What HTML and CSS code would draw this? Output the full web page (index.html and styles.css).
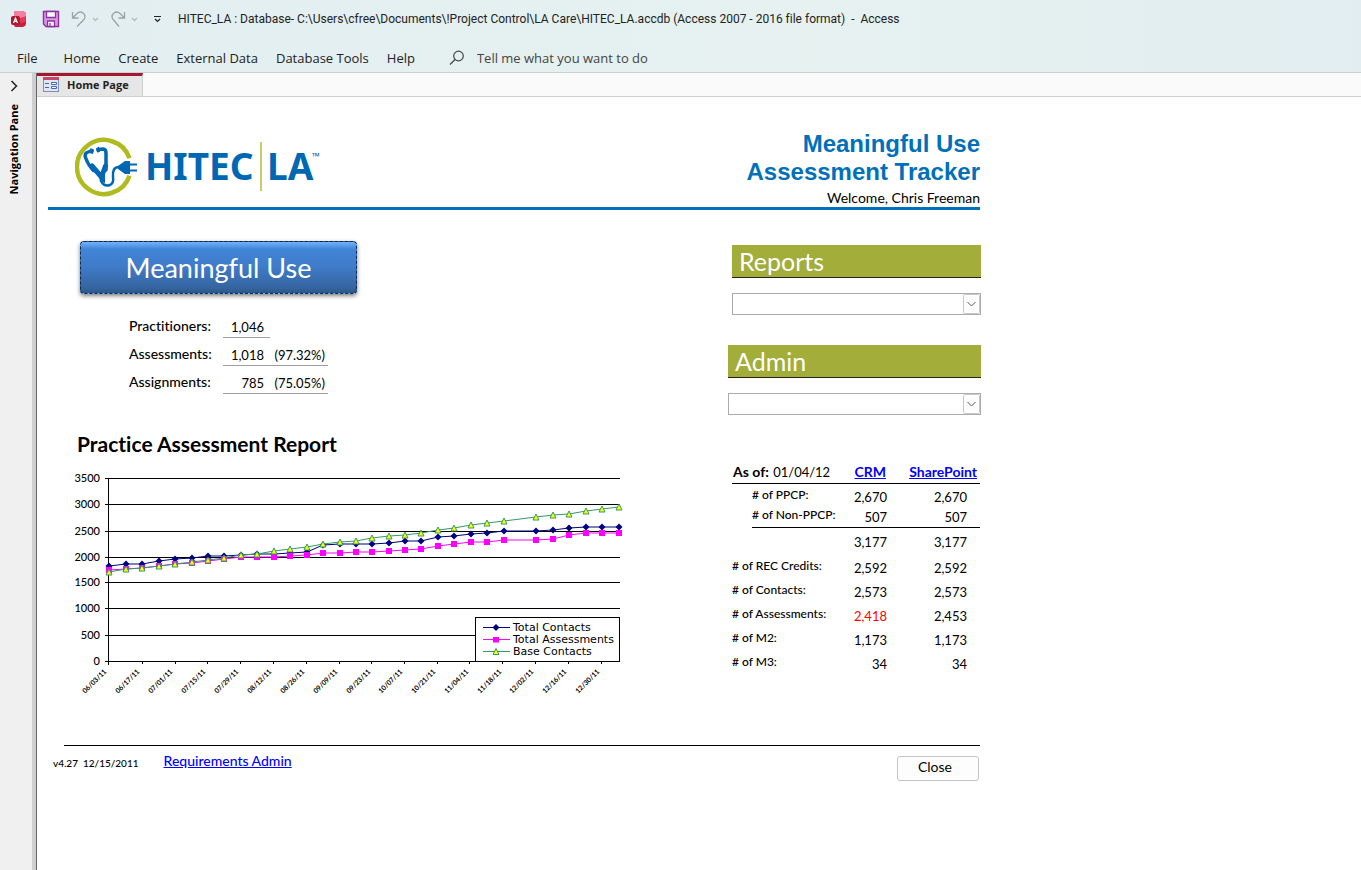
FILE: index.html
```html
<!DOCTYPE html>
<html lang="en">
<head>
    <meta charset="UTF-8">
    <meta name="viewport" content="width=device-width, initial-scale=1.0">
    <title>HITEC_LA - Access</title>
    <link rel="stylesheet" href="styles.css">
</head>
<body>

    <header class="ribbon">
        <div class="title-bar">
            <svg class="app-icon" width="16" height="18" viewBox="0 0 16 18">
                <path d="M3 3a2 2 0 0 1 2-2h7q3 1 3 3v10q0 2-3 3H5a2 2 0 0 1-2-2z" fill="#c8203c"/>
                <path d="M3 3a2 2 0 0 1 2-2h7q3 1 3 3v2q-2 2-6 2-4 0-6-2z" fill="#f77fa0"/>
                <path d="M7 8q6 0 8-2v5q-2 2-7 2z" fill="#e8385a"/>
                <rect x="0" y="6" width="9" height="9" rx="2" fill="#b01832"/>
                <path d="M2.5 13l2-5 2 5M3.3 11.4h2.4" fill="none" stroke="#fff" stroke-width="1.2"/>
            </svg>
            <button class="tool save" aria-label="Save">
                <svg width="18" height="18" viewBox="0 0 18 18">
                    <path d="M1.5 1.5h15v15H4L1.5 14z" fill="#d79be0" stroke="#8f2fa3" stroke-width="1.4"/>
                    <path d="M4.5 1.5h9v6h-9zM5.5 11h7v5.5h-7z" fill="#f6fafb" stroke="#8f2fa3" stroke-width="1.3"/>
                    <path d="M8 13v3" stroke="#8f2fa3" stroke-width="1.3"/>
                </svg>
            </button>
            <button class="tool undo" aria-label="Undo">
                <svg width="28" height="18" viewBox="0 0 28 18">
                    <path d="M1.5 2v6h6M1.5 8L6 3.5Q9 .8 12 3q4 3.5 0 7.5L6 16.5" fill="none" stroke="#9aa3a6" stroke-width="1.3"/>
                    <path d="M22 8l2.5 2.5L27 8" fill="none" stroke="#b4bcbe" stroke-width="1.3"/>
                </svg>
            </button>
            <button class="tool redo" aria-label="Redo">
                <svg width="28" height="18" viewBox="0 0 28 18">
                    <path d="M14.5 2v6h-6M14.5 8L10 3.5Q7 .8 4 3q-4 3.5 0 7.5l5 6" fill="none" stroke="#9aa3a6" stroke-width="1.3"/>
                    <path d="M22 8l2.5 2.5L27 8" fill="none" stroke="#b4bcbe" stroke-width="1.3"/>
                </svg>
            </button>
            <button class="tool more" aria-label="Customize Quick Access Toolbar">
                <svg width="9" height="8" viewBox="0 0 9 8">
                    <path d="M1 1.5h7M2 4l2.5 2.5L7 4" fill="none" stroke="#222" stroke-width="1.2"/>
                </svg>
            </button>
            <span class="file-name">HITEC_LA : Database- C:\Users\cfree\Documents\!Project Control\LA Care\HITEC_LA.accdb (Access 2007 - 2016 file format)&nbsp; -&nbsp; Access</span>
        </div>
        <nav class="menu">
            <button class="file">File</button>
            <button>Home</button>
            <button>Create</button>
            <button>External Data</button>
            <button>Database Tools</button>
            <button>Help</button>
            <label class="tell-me">
                <svg width="16" height="16" viewBox="0 0 16 16">
                    <circle cx="9.5" cy="6" r="4.8" fill="none" stroke="#444" stroke-width="1.2"/>
                    <path d="M6 9.5L1 14.5" stroke="#444" stroke-width="1.3"/>
                </svg>
                <input type="text" placeholder="Tell me what you want to do">
            </label>
        </nav>
    </header>

    <div class="workspace">
        <aside class="nav-pane">
            <button class="expand" aria-label="Expand Navigation Pane">
                <svg width="8" height="12" viewBox="0 0 8 12">
                    <path d="M1.5 1l5 5-5 5" fill="none" stroke="#222" stroke-width="1.5"/>
                </svg>
            </button>
            <span class="nav-label">Navigation Pane</span>
        </aside>

        <main class="document">
            <div class="tabs">
                <button class="tab">
                    <svg width="16" height="15" viewBox="0 0 16 15">
                        <rect x=".5" y=".5" width="15" height="14" fill="#dfe6f4" stroke="#7d8fb8"/>
                        <rect x="0" y="0" width="16" height="3" fill="#c4476b"/>
                        <path d="M2 6.5h4M2 10.5h4" stroke="#4a68a8"/>
                        <path d="M8.5 5.5h5v2h-5zM8.5 9.5h5v2h-5z" fill="#fff" stroke="#4a68a8"/>
                    </svg>
                    Home Page
                </button>
            </div>

            <div class="form">
                <div class="form-header">
                    <svg class="logo" width="250" height="60" viewBox="0 0 250 60">
                        <path d="M54.5 21.3A27 27 0 1 0 54.5 38.7" fill="none" stroke="#afbb1f" stroke-width="4.5"/>
                        <g fill="none" stroke="#0068b3" stroke-linecap="round" stroke-linejoin="round">
                            <path d="M17 13.5l-5 2q-2.500 1-1.500 5 3 8 8 13" stroke-width="3.5"/>
                            <path d="M23 12.5l5.500-.5q2.500.5 2.500 4v17" stroke-width="3.5"/>
                            <path d="M17 29l9.500 11 4-11" stroke-width="5"/>
                            <path d="M26 39v5q3 6 9 4 4-2 3-8-1-10 6-10h4" stroke-width="2.5"/>
                        </g>
                        <path d="M15.500 11l3.500 2-1 4-3.500-1zM24 9.500l-3 2 1 4 3-.5z" fill="#0068b3"/>
                        <path d="M24 38l6-1v9l-5-2z" fill="#0068b3"/>
                        <path d="M43 29l7-5h5v2.500h7v2h-7v4h7v2h-7V37h-5l-7-5z" fill="#0068b3"/>
                        <text class="logo-text" x="70" y="43">HITEC</text>
                        <path d="M186 5v49" stroke="#c5cf66" stroke-width="2"/>
                        <text class="logo-text" x="192" y="43">LA</text>
                        <text class="logo-tm" x="237" y="23">™</text>
                    </svg>
                    <div class="heading">
                        <h1>Meaningful Use<br>Assessment Tracker</h1>
                        <p class="welcome">Welcome, Chris Freeman</p>
                    </div>
                </div>

                <div class="form-body">
                    <section class="left">
                        <button class="big-button">Meaningful Use</button>

                        <table class="stats">
                            <tr><th scope="row">Practitioners:</th><td>1,046</td></tr>
                            <tr><th scope="row">Assessments:</th><td>1,018</td><td class="pct">(97.32%)</td></tr>
                            <tr><th scope="row">Assignments:</th><td>785</td><td class="pct">(75.05%)</td></tr>
                        </table>

                        <h2>Practice Assessment Report</h2>
                        <svg class="chart" width="560" height="230" viewBox="70 470 560 230">
                            <defs>
                                <marker id="diamond" markerUnits="userSpaceOnUse" markerWidth="8" markerHeight="8" refX="4" refY="4">
                                    <path d="M4 .5L7.5 4 4 7.5.5 4z" fill="#000080"/>
                                </marker>
                                <marker id="square" markerUnits="userSpaceOnUse" markerWidth="6" markerHeight="6" refX="3" refY="3">
                                    <rect width="6" height="6" fill="#ff00ff"/>
                                </marker>
                                <marker id="triangle" markerUnits="userSpaceOnUse" markerWidth="8" markerHeight="8" refX="4" refY="4">
                                    <path d="M4 1l3 6H1z" fill="#ffff00" stroke="#339966"/>
                                </marker>
                            </defs>
                            <path class="grid" d="M105 478.5h515M105 504.5h515M105 531.5h515M105 557.5h515M105 582.5h515M105 608.5h515M105 635.5h515M105 661.5h515M108.5 478v187"/>
                            <path class="grid" d="M142.5 661v3M175.5 661v3M207.5 661v3M240.5 661v3M273.5 661v3M306.5 661v3M339.5 661v3M371.5 661v3M404.5 661v3M437.5 661v3M469.5 661v3M502.5 661v3M535.5 661v3M568.5 661v3M601.5 661v3"/>
                            <g class="y-labels">
                                <text x="100" y="482">3500</text>
                                <text x="100" y="508">3000</text>
                                <text x="100" y="535">2500</text>
                                <text x="100" y="561">2000</text>
                                <text x="100" y="586">1500</text>
                                <text x="100" y="612">1000</text>
                                <text x="100" y="639">500</text>
                                <text x="100" y="665">0</text>
                            </g>
                            <g class="x-labels">
                                <text transform="translate(107 672) rotate(-45)">06/03/11</text>
                                <text transform="translate(140 672) rotate(-45)">06/17/11</text>
                                <text transform="translate(173 672) rotate(-45)">07/01/11</text>
                                <text transform="translate(206 672) rotate(-45)">07/15/11</text>
                                <text transform="translate(239 672) rotate(-45)">07/29/11</text>
                                <text transform="translate(272 672) rotate(-45)">08/12/11</text>
                                <text transform="translate(305 672) rotate(-45)">08/26/11</text>
                                <text transform="translate(338 672) rotate(-45)">09/09/11</text>
                                <text transform="translate(371 672) rotate(-45)">09/23/11</text>
                                <text transform="translate(403 672) rotate(-45)">10/07/11</text>
                                <text transform="translate(436 672) rotate(-45)">10/21/11</text>
                                <text transform="translate(469 672) rotate(-45)">11/04/11</text>
                                <text transform="translate(502 672) rotate(-45)">11/18/11</text>
                                <text transform="translate(534 672) rotate(-45)">12/02/11</text>
                                <text transform="translate(567 672) rotate(-45)">12/16/11</text>
                                <text transform="translate(600 672) rotate(-45)">12/30/11</text>
                            </g>
                            <polyline class="line contacts" points="109,566 126,564 142,564 159,561 175,559 192,558 208,556 224,556 241,555 257,554 274,554 290,553 307,552 323,545 340,544 356,544 372,544 389,543 405,541 421,541 438,537 454,536 471,534 487,533 504,531 536,531 553,530 569,528 586,527 602,527 619,527"/>
                            <polyline class="line assessments" points="109,570 126,569 142,568 159,566 175,564 192,563 208,561 224,559 241,557 257,557 274,557 290,556 307,555 323,553 340,553 356,552 372,552 389,551 405,550 421,549 438,546 454,544 471,542 487,542 504,540 536,540 553,539 569,535 586,533 602,533 619,533"/>
                            <polyline class="line base" points="109,572 126,569 142,568 159,566 175,564 192,562 208,560 224,558 241,555 257,554 274,551 290,549 307,547 323,544 340,542 356,541 372,538 389,536 405,535 421,533 438,530 454,528 471,525 487,523 504,521 536,517 553,515 569,514 586,511 602,509 619,507"/>
                            <rect x="475.5" y="617.5" width="144" height="44" fill="#fff" stroke="#000"/>
                            <polyline class="line contacts legend" points="483,627.5 496,627.5 510,627.5"/>
                            <polyline class="line assessments legend" points="483,639.5 496,639.5 510,639.5"/>
                            <polyline class="line base legend" points="483,651.5 496,651.5 510,651.5"/>
                            <g class="legend-text">
                                <text x="513" y="631">Total Contacts</text>
                                <text x="513" y="643">Total Assessments</text>
                                <text x="513" y="655">Base Contacts</text>
                            </g>
                        </svg>
                    </section>

                    <section class="right">
                        <div class="picker reports">
                            <label for="reports">Reports</label>
                            <div class="combo">
                                <select id="reports"><option></option></select>
                                <svg class="arrow" width="18" height="20" viewBox="0 0 18 20">
                                    <rect x=".5" y=".5" width="16" height="19" rx="1" fill="#fdfdfd" stroke="#c8c8c8"/>
                                    <path d="M4.5 8l4 4 4-4" fill="none" stroke="#555"/>
                                </svg>
                            </div>
                        </div>
                        <div class="picker">
                            <label for="admin">Admin</label>
                            <div class="combo">
                                <select id="admin"><option></option></select>
                                <svg class="arrow" width="18" height="20" viewBox="0 0 18 20">
                                    <rect x=".5" y=".5" width="16" height="19" rx="1" fill="#fdfdfd" stroke="#c8c8c8"/>
                                    <path d="M4.5 8l4 4 4-4" fill="none" stroke="#555"/>
                                </svg>
                            </div>
                        </div>

                        <table class="counts">
                            <thead>
                                <tr>
                                    <th colspan="2" class="as-of">As of: <span>01/04/12</span></th>
                                    <th class="crm"><a href="#">CRM</a></th>
                                    <th class="sharepoint"><a href="#">SharePoint</a></th>
                                </tr>
                            </thead>
                            <tbody class="sub">
                                <tr><td class="indent"></td><th scope="row"># of PPCP:</th><td>2,670</td><td>2,670</td></tr>
                                <tr><td class="indent"></td><th scope="row"># of Non-PPCP:</th><td>507</td><td>507</td></tr>
                            </tbody>
                            <tbody>
                                <tr class="total"><td colspan="2"></td><td>3,177</td><td>3,177</td></tr>
                                <tr><th scope="row" colspan="2"># of REC Credits:</th><td>2,592</td><td>2,592</td></tr>
                                <tr><th scope="row" colspan="2"># of Contacts:</th><td>2,573</td><td>2,573</td></tr>
                                <tr><th scope="row" colspan="2"># of Assessments:</th><td class="low">2,418</td><td>2,453</td></tr>
                                <tr><th scope="row" colspan="2"># of M2:</th><td>1,173</td><td>1,173</td></tr>
                                <tr><th scope="row" colspan="2"># of M3:</th><td>34</td><td>34</td></tr>
                            </tbody>
                        </table>
                    </section>
                </div>

                <footer class="form-footer">
                    <span class="version">v4.27&nbsp; 12/15/2011</span>
                    <a class="requirements" href="#">Requirements Admin</a>
                    <button class="close">Close</button>
                </footer>
            </div>
        </main>
    </div>

</body>
</html>
```

FILE: styles.css
```css
* {
    box-sizing: border-box;
}

body {
    margin: 0;
    min-height: 100vh;
    display: flex;
    flex-direction: column;
    font-family: Lato, "Liberation Sans", sans-serif;
    font-size: 13px;
    font-variant-ligatures: none;
    color: #000;
    background: #fff;
}

button {
    font: inherit;
    color: inherit;
    background: none;
    border: none;
    padding: 0;
}

svg {
    display: block;
}

h1, h2, p {
    margin: 0;
}

a {
    color: #0000ff;
}

/* ribbon */
.ribbon {
    font-family: "Open Sans", "Noto Sans", sans-serif;
    color: #222;
    background: linear-gradient(90deg, #e2eef1, #e6f1f0 60%, #e1edf0);
    border-bottom: 1px solid #c9d1d3;
    box-shadow: 0 1px 3px rgba(0, 0, 0, 0.15);
}

.title-bar {
    display: flex;
    align-items: center;
    height: 38px;
    padding-left: 11px;
    font-size: 12px;
}

.save {
    margin-left: 15px;
}

.undo, .redo {
    margin-left: 11px;
}

.more {
    margin: 0 16px 0 15px;
}

.file-name {
    font-family: Roboto, "Open Sans", sans-serif;
    white-space: pre;
}

.menu {
    display: flex;
    align-items: center;
    gap: 18px;
    height: 34px;
    padding: 5px 16px 0 17px;
    font-size: 13px;
}

.file {
    margin-right: 8px;
}

.tell-me {
    display: flex;
    align-items: center;
    gap: 12px;
    margin-left: 16px;
}

.tell-me input {
    width: 220px;
    padding: 0;
    border: none;
    background: none;
    font: inherit;
}

.tell-me input::placeholder {
    color: #444;
    opacity: 1;
}

/* workspace */
.workspace {
    flex: 1;
    display: flex;
}

.nav-pane {
    width: 37px;
    flex-shrink: 0;
    display: flex;
    flex-direction: column;
    align-items: center;
    gap: 12px;
    padding: 7px 9px 0 0;
    background: linear-gradient(90deg, #f0f0f0 32px, #cfcfcf 32px, #cfcfcf 36px, #666 36px);
}

.nav-label {
    writing-mode: vertical-rl;
    transform: rotate(180deg);
    font: bold 11px/16px "Open Sans", sans-serif;
}

.document {
    flex: 1;
    min-width: 0;
}

.tabs {
    height: 24px;
    display: flex;
    background: #fafafa;
    border-bottom: 1px solid #cfcfcf;
}

.tab {
    display: flex;
    align-items: center;
    gap: 8px;
    padding: 0 13px 3px 6px;
    background: #e6e6e6;
    border-top: 3px solid #a4182f;
    border-right: 1px solid #cfcfcf;
    font: bold 11px "Open Sans", sans-serif;
    color: #222;
}

/* form */
.form {
    max-width: 943px;
    padding: 33px 0 0 11px;
}

.form-header {
    display: flex;
    justify-content: space-between;
    align-items: flex-start;
    border-bottom: 3px solid #0070bb;
}

.logo {
    margin: 7px 0 0 27px;
}

.logo-text {
    font: bold 37px "Noto Sans", sans-serif;
    fill: #0068b3;
}

.logo-tm {
    font: bold 10px "Open Sans", sans-serif;
    fill: #0068b3;
}

.heading {
    text-align: right;
}

h1 {
    font: bold 24px/28px "Liberation Sans", Arial, sans-serif;
    color: #0070bb;
}

.welcome {
    line-height: 18px;
    padding-top: 3px;
    font-size: 14px;
}

.form-body {
    display: flex;
    justify-content: space-between;
    margin-right: -1px;
    padding-top: 31px;
}

.left {
    padding-left: 22px;
}

.big-button {
    display: block;
    width: 277px;
    height: 53px;
    margin-left: 10px;
    border: 1px dashed #10264a;
    border-radius: 4px;
    background: linear-gradient(#6fb4fa, #4285d8 7px, #3f7bc8 25px, #35659f 46px, #2c5588);
    box-shadow: 0 2px 4px rgba(0, 0, 0, 0.5);
    font-size: 27px;
    color: #fff;
}

.stats {
    margin: 15px 0 0 59px;
    border-collapse: collapse;
    font-size: 13px;
}

.stats tr {
    height: 28px;
}

.stats th {
    width: 94px;
    padding: 5px 0 0;
    text-align: left;
    font-size: 14px;
    font-weight: 500;
}

.stats td {
    width: 47px;
    padding: 8px 6px 0 0;
    border-bottom: 1px solid #a0a0a0;
    text-align: right;
}

.stats .pct {
    width: 58px;
    padding-right: 3px;
}

h2 {
    margin: 36px 0 0 7px;
    font-size: 21px;
    line-height: 28px;
}

.chart {
    margin-top: 12px;
}

.grid {
    fill: none;
    stroke: #000;
    shape-rendering: crispEdges;
}

.y-labels {
    font: 500 11px Lato, sans-serif;
    text-anchor: end;
}

.x-labels {
    font: bold 7px Lato, sans-serif;
    text-anchor: end;
}

.legend-text {
    font: 11px "DejaVu Sans", sans-serif;
}

.line {
    fill: none;
}

.contacts {
    stroke: #000080;
    marker: url(#diamond);
}

.assessments {
    stroke: #ff00ff;
    marker: url(#square);
}

.base {
    stroke: #339966;
    marker: url(#triangle);
}

.legend {
    marker-start: none;
    marker-end: none;
}

.right {
    width: 253px;
    padding-top: 4px;
}

.picker {
    margin-bottom: 30px;
}

.reports {
    margin-left: 4px;
}

.picker label {
    display: block;
    height: 33px;
    margin-bottom: 15px;
    padding-left: 7px;
    border-bottom: 1px solid #222;
    background: #a2ad3a;
    font-size: 25px;
    line-height: 33px;
    color: #fff;
}

.combo {
    position: relative;
    height: 22px;
}

.combo select {
    width: 100%;
    height: 22px;
    appearance: none;
    border: 1px solid #ababab;
    border-radius: 0;
    background: #fff;
}

.arrow {
    position: absolute;
    top: 1px;
    right: 0;
    pointer-events: none;
}

.counts {
    width: 248px;
    margin: 46px 0 0 4px;
    border-collapse: collapse;
    font-size: 13px;
    line-height: 16px;
}

.counts th {
    padding: 0 0 4px;
    text-align: left;
    font-size: 12px;
    font-weight: 500;
    white-space: nowrap;
}

.counts td {
    padding: 0 13px 0 0;
    text-align: right;
}

.counts tr {
    height: 24px;
}

.counts thead tr {
    height: 22px;
    border-bottom: 1px solid #000;
}

.counts thead th {
    padding: 0;
    font-size: 14px;
    font-weight: bold;
    text-align: right;
}

.counts thead .as-of {
    text-align: left;
    padding-left: 1px;
}

.as-of span {
    font-size: 13px;
    font-weight: normal;
    padding-left: 1px;
}

.counts thead .crm {
    padding-right: 1px;
}

.counts thead .sharepoint {
    width: 93px;
    padding-right: 3px;
}

.counts td:nth-last-child(2) {
    padding-right: 0;
}

.counts .sub tr {
    height: 20px;
}

.counts .sub tr:first-child > * {
    padding-top: 3px;
}

.counts .indent {
    width: 20px;
    padding: 0;
}

.sub tr:last-child > :not(.indent) {
    border-bottom: 1px solid #000;
}

.counts .total {
    height: 29px;
}

.counts .low {
    color: #ff0000;
}

.form-footer {
    display: flex;
    align-items: flex-start;
    margin: 45px 0 0 16px;
    padding-top: 7px;
    border-top: 1px solid #000;
}

.version {
    margin-left: -11px;
    font-size: 10px;
    font-weight: 500;
    line-height: 20px;
}

.requirements {
    margin-left: 25px;
    font-size: 14px;
    font-weight: 500;
    line-height: 16px;
}

.close {
    width: 82px;
    height: 25px;
    margin: 3px 1px 0 auto;
    padding: 0 6px 3px 0;
    border: 1px solid #c4c4c4;
    border-radius: 3px;
    background: #fdfdfd;
    font-size: 14px;
}
```
